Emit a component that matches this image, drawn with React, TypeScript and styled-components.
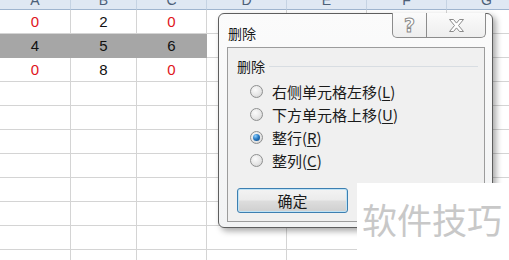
import React from "react";
import styled, { createGlobalStyle } from "styled-components";

const GlobalStyle = createGlobalStyle`
  html, body {
    margin: 0;
    padding: 0;
    background: #ffffff;
  }
  body {
    width: 509px;
    height: 260px;
    overflow: hidden;
    position: relative;
    font-family: "Noto Sans CJK SC", "Noto Sans", sans-serif;
  }
`;

const columns = ["A", "B", "C", "D", "E", "F", "G"];
const widths = [71, 66, 70, 80, 80, 80, 80];

const rows: { v: string; red?: boolean }[][] = [
  [{ v: "0", red: true }, { v: "2" }, { v: "0", red: true }],
  [{ v: "4" }, { v: "5" }, { v: "6" }],
  [{ v: "0", red: true }, { v: "8" }, { v: "0", red: true }],
];

const App: React.FC = () => {
  const emptyRows = Array.from({ length: 8 });
  return (
    <>
      <GlobalStyle />
      <Viewport>
        <Sheet>
          {columns.map(c => (
            <HeaderCell key={c}>{c}</HeaderCell>
          ))}
          {rows.map((r, ri) =>
            columns.map((c, ci) => (
              <Cell key={c + ri} $red={r[ci]?.red} $selected={ri === 1 && ci < 3}>
                {r[ci]?.v}
              </Cell>
            ))
          )}
          {emptyRows.map((_, ri) =>
            columns.map(c => <Cell key={c + "e" + ri} />)
          )}
        </Sheet>
      </Viewport>

      <Dialog>
        <TitleBar>
          <Title>删除</Title>
          <CaptionButtons>
            <HelpButton>?</HelpButton>
            <CloseButton>
              <svg width="17" height="15" viewBox="0 0 17 15">
                <path
                  d="M1.5 1.5h4l3 3.6 3-3.6h4l-5 6 5 6h-4l-3-3.6-3 3.6h-4l5-6z"
                  fill="#ffffff"
                  stroke="#8a8a8a"
                  strokeWidth="1"
                  strokeLinejoin="round"
                />
              </svg>
            </CloseButton>
          </CaptionButtons>
        </TitleBar>

        <Client>
          <GroupHeader>
            <GroupLabel>删除</GroupLabel>
            <GroupLine />
          </GroupHeader>
          <RadioList>
            <RadioRow>
              <Radio />
              <span>
                右侧单元格左移(<u>L</u>)
              </span>
            </RadioRow>
            <RadioRow>
              <Radio />
              <span>
                下方单元格上移(<u>U</u>)
              </span>
            </RadioRow>
            <RadioRow>
              <Radio $checked />
              <span>
                整行(<u>R</u>)
              </span>
            </RadioRow>
            <RadioRow>
              <Radio />
              <span>
                整列(<u>C</u>)
              </span>
            </RadioRow>
          </RadioList>
          <OkButton>确定</OkButton>
        </Client>
      </Dialog>

      <Watermark>软件技巧</Watermark>
    </>
  );
};
export default App;

// the sheet is scrolled so that only the bottom of the column header shows
const Viewport = styled.div`
  height: 260px;
  overflow: hidden;
`;

const Sheet = styled.div`
  margin-top: -14px;
  display: grid;
  grid-template-columns: ${widths.map(w => w + "px").join(" ")};
  grid-auto-rows: 24px;
  font-family: "Liberation Sans", Arial, sans-serif;
`;

const HeaderCell = styled.div`
  box-sizing: border-box;
  background: #dfe8f3;
  border-right: 1px solid #c5d3e3;
  border-bottom: 1px solid #9fb5cf;
  display: flex;
  align-items: flex-end;
  justify-content: center;
  padding-bottom: 1px;
  line-height: 16px;
  font-size: 14px;
  color: #4c6078;
`;

const Cell = styled.div<{ $red?: boolean; $selected?: boolean }>`
  box-sizing: border-box;
  border-right: 1px solid ${p => (p.$selected ? "#a6a6a6" : "#d4d4d4")};
  border-bottom: 1px solid ${p => (p.$selected ? "#a6a6a6" : "#d4d4d4")};
  background: ${p => (p.$selected ? "#a6a6a6" : "#ffffff")};
  display: flex;
  align-items: center;
  justify-content: center;
  font-size: 15px;
  color: ${p => (p.$red ? "#e0151b" : "#111111")};
`;

const Dialog = styled.div`
  position: absolute;
  left: 218px;
  top: 13px;
  width: 275px;
  height: 215px;
  box-sizing: border-box;
  border: 1px solid #5e5e5e;
  border-radius: 6px;
  background: linear-gradient(#fbfbfb, #f2f3f4);
  box-shadow: 3px 3px 6px rgba(0, 0, 0, 0.35);
  display: flex;
  flex-direction: column;
  padding: 0 7px 5px 8px;
`;

const TitleBar = styled.div`
  height: 34px;
  display: flex;
  justify-content: space-between;
  align-items: flex-start;
`;

const Title = styled.div`
  margin-top: 10px;
  padding-left: 1px;
  font-size: 14px;
  line-height: 18px;
  color: #1a1a1a;
`;

const CaptionButtons = styled.div`
  margin-top: -1px;
  margin-right: -1px;
  height: 25px;
  width: 94px;
  box-sizing: border-box;
  border: 1px solid #8c8c8c;
  border-top: none;
  border-radius: 0 0 5px 5px;
  background: linear-gradient(#fbfbfb, #eeeeee);
  display: flex;
  overflow: hidden;
`;

const HelpButton = styled.div`
  width: 34px;
  box-sizing: border-box;
  border-right: 1px solid #8c8c8c;
  display: flex;
  align-items: center;
  justify-content: center;
  font-family: "DejaVu Sans", sans-serif;
  font-weight: bold;
  font-size: 19px;
  line-height: 20px;
  color: #ffffff;
  -webkit-text-stroke: 1px #8a8a8a;
`;

const CloseButton = styled.div`
  flex: 1;
  display: flex;
  align-items: center;
  justify-content: center;
`;

const Client = styled.div`
  flex: 1;
  box-sizing: border-box;
  border: 1px solid #9c9c9c;
  background: #f0f0f0;
  display: flex;
  flex-direction: column;
  padding: 9px 6px 8px 9px;
`;

const GroupHeader = styled.div`
  display: flex;
  align-items: center;
  gap: 4px;
`;

const GroupLabel = styled.span`
  font-size: 14px;
  line-height: 18px;
  color: #1a1a1a;
`;

const GroupLine = styled.div`
  flex: 1;
  height: 1px;
  background: #d8dde2;
`;

const RadioList = styled.div`
  display: flex;
  flex-direction: column;
  margin-top: 5px;
  padding-left: 13px;
`;

const RadioRow = styled.div`
  height: 23px;
  display: flex;
  align-items: center;
  gap: 9px;
  font-size: 15px;
  color: #1a1a1a;

  u {
    text-underline-offset: 2px;
  }
`;

const Radio = styled.span<{ $checked?: boolean }>`
  width: 13px;
  height: 13px;
  box-sizing: border-box;
  border-radius: 50%;
  border: 1px solid #8f9090;
  background: radial-gradient(circle at 40% 35%, #fbfbfb 0%, #e6e6e6 55%, #c9c9c9 100%);
  display: flex;
  align-items: center;
  justify-content: center;

  &::after {
    content: "";
    display: ${p => (p.$checked ? "block" : "none")};
    width: 7px;
    height: 7px;
    border-radius: 50%;
    background: radial-gradient(circle at 35% 30%, #8fd0ff 0%, #2a7cc4 45%, #0b3f78 100%);
  }
`;

const OkButton = styled.button`
  margin-top: 16px;
  width: 111px;
  height: 25px;
  box-sizing: border-box;
  border: 1px solid #3c7fb1;
  border-radius: 3px;
  background: linear-gradient(#f3f3f3 0%, #ebebeb 48%, #dddddd 52%, #cfcfcf 100%);
  box-shadow: inset 0 0 0 1px #bfe3f6;
  font-family: "Noto Sans CJK SC", sans-serif;
  font-size: 15px;
  line-height: 20px;
  color: #1a1a1a;
  padding: 0;
`;

const Watermark = styled.div`
  position: absolute;
  left: 357px;
  top: 183px;
  right: 0;
  bottom: 0;
  background: #ffffff;
  padding: 15px 0 0 5px;
  font-size: 35px;
  line-height: 42px;
  color: #c8c8c8;
  white-space: nowrap;
`;
